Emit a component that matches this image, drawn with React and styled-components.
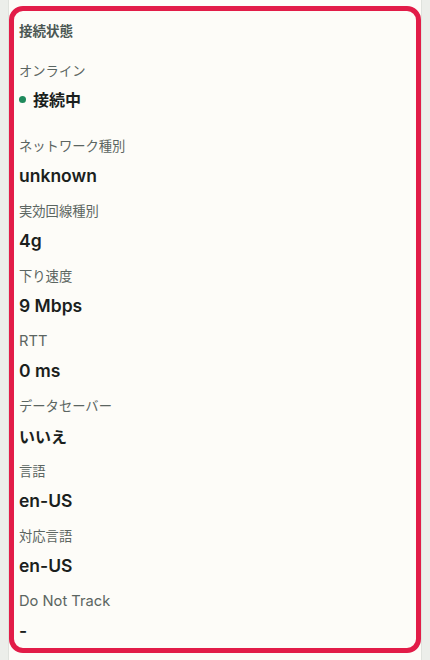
import React from 'react';
import styled, { createGlobalStyle } from 'styled-components';

const GlobalStyle = createGlobalStyle`
    html, body {
        margin: 0;
        padding: 0;
        background-color: #eceeea;
        font-family: "Noto Sans CJK JP", sans-serif;
    }
`;

const items = [
    { label: 'ネットワーク種別', value: 'unknown' },
    { label: '実効回線種別', value: '4g' },
    { label: '下り速度', value: '9 Mbps' },
    { label: 'RTT', value: '0 ms' },
    { label: 'データセーバー', value: 'いいえ' },
    { label: '言語', value: 'en-US' },
    { label: '対応言語', value: 'en-US' },
    { label: 'Do Not Track', value: '-' },
];

// latin text is drawn a bit larger, like the mac font does
const isLatin = (s) => !/[\u3000-\u9fff]/.test(s);

const App = () => {

    return (
        <>
            <GlobalStyle />
            <Page>
                <Panel>
                    <Card>
                        <Title>接続状態</Title>
                        <Item $extra>
                            <Label>オンライン</Label>
                            <Value>
                                <Dot />
                                接続中
                            </Value>
                        </Item>
                        {items.map((item) => (
                            <Item key={item.label + item.value}>
                                <Label $latin={isLatin(item.label)}>{item.label}</Label>
                                <Value $latin={isLatin(item.value)}>{item.value}</Value>
                            </Item>
                        ))}
                    </Card>
                </Panel>
            </Page>
        </>
    );
};

export default App;

const Page = styled.div`
    width: 100%;
    height: 660px;
    padding: 0 8px;
    box-sizing: border-box;
    overflow: hidden;
`;
const Panel = styled.div`
    height: 100%;
    background-color: #fdfcf8;
    border-left: 1px solid #dfe2dd;
    border-right: 1px solid #dfe2dd;
    padding: 6px 0 7px 0;
    box-sizing: border-box;
`;
const Card = styled.div`
    height: 100%;
    box-sizing: border-box;
    border: 5.5px solid #e21c48;
    border-radius: 14px;
    padding: 9px 5px 0 5px;
    display: flex;
    flex-direction: column;
    gap: 15px;
`;
const Title = styled.div`
    font-size: 13.5px;
    font-weight: 700;
    line-height: 20px;
    color: #4b5753;
    margin-bottom: 6px;
`;
const Item = styled.div`
    display: flex;
    flex-direction: column;
    gap: ${(p) => (p.$extra ? '8px' : '10px')};
    margin-bottom: ${(p) => (p.$extra ? '12px' : '0')};
`;
const Label = styled.div`
    font-family: ${(p) => (p.$latin ? 'Inter, sans-serif' : '"Noto Sans CJK JP", sans-serif')};
    font-size: ${(p) => (p.$latin ? '14.7px' : '13.3px')};
    line-height: 20px;
    color: #5b6561;
`;
const Value = styled.div`
    display: flex;
    align-items: center;
    gap: 7px;
    font-family: ${(p) => (p.$latin ? 'Inter, sans-serif' : '"Noto Sans CJK JP", sans-serif')};
    font-size: ${(p) => (p.$latin ? '17.5px' : '16px')};
    font-weight: ${(p) => (p.$latin ? 600 : 700)};
    line-height: 20px;
    color: #1b1f1d;
`;
const Dot = styled.span`
    width: 7px;
    height: 7px;
    border-radius: 50%;
    background-color: #1f8a5c;
`;
